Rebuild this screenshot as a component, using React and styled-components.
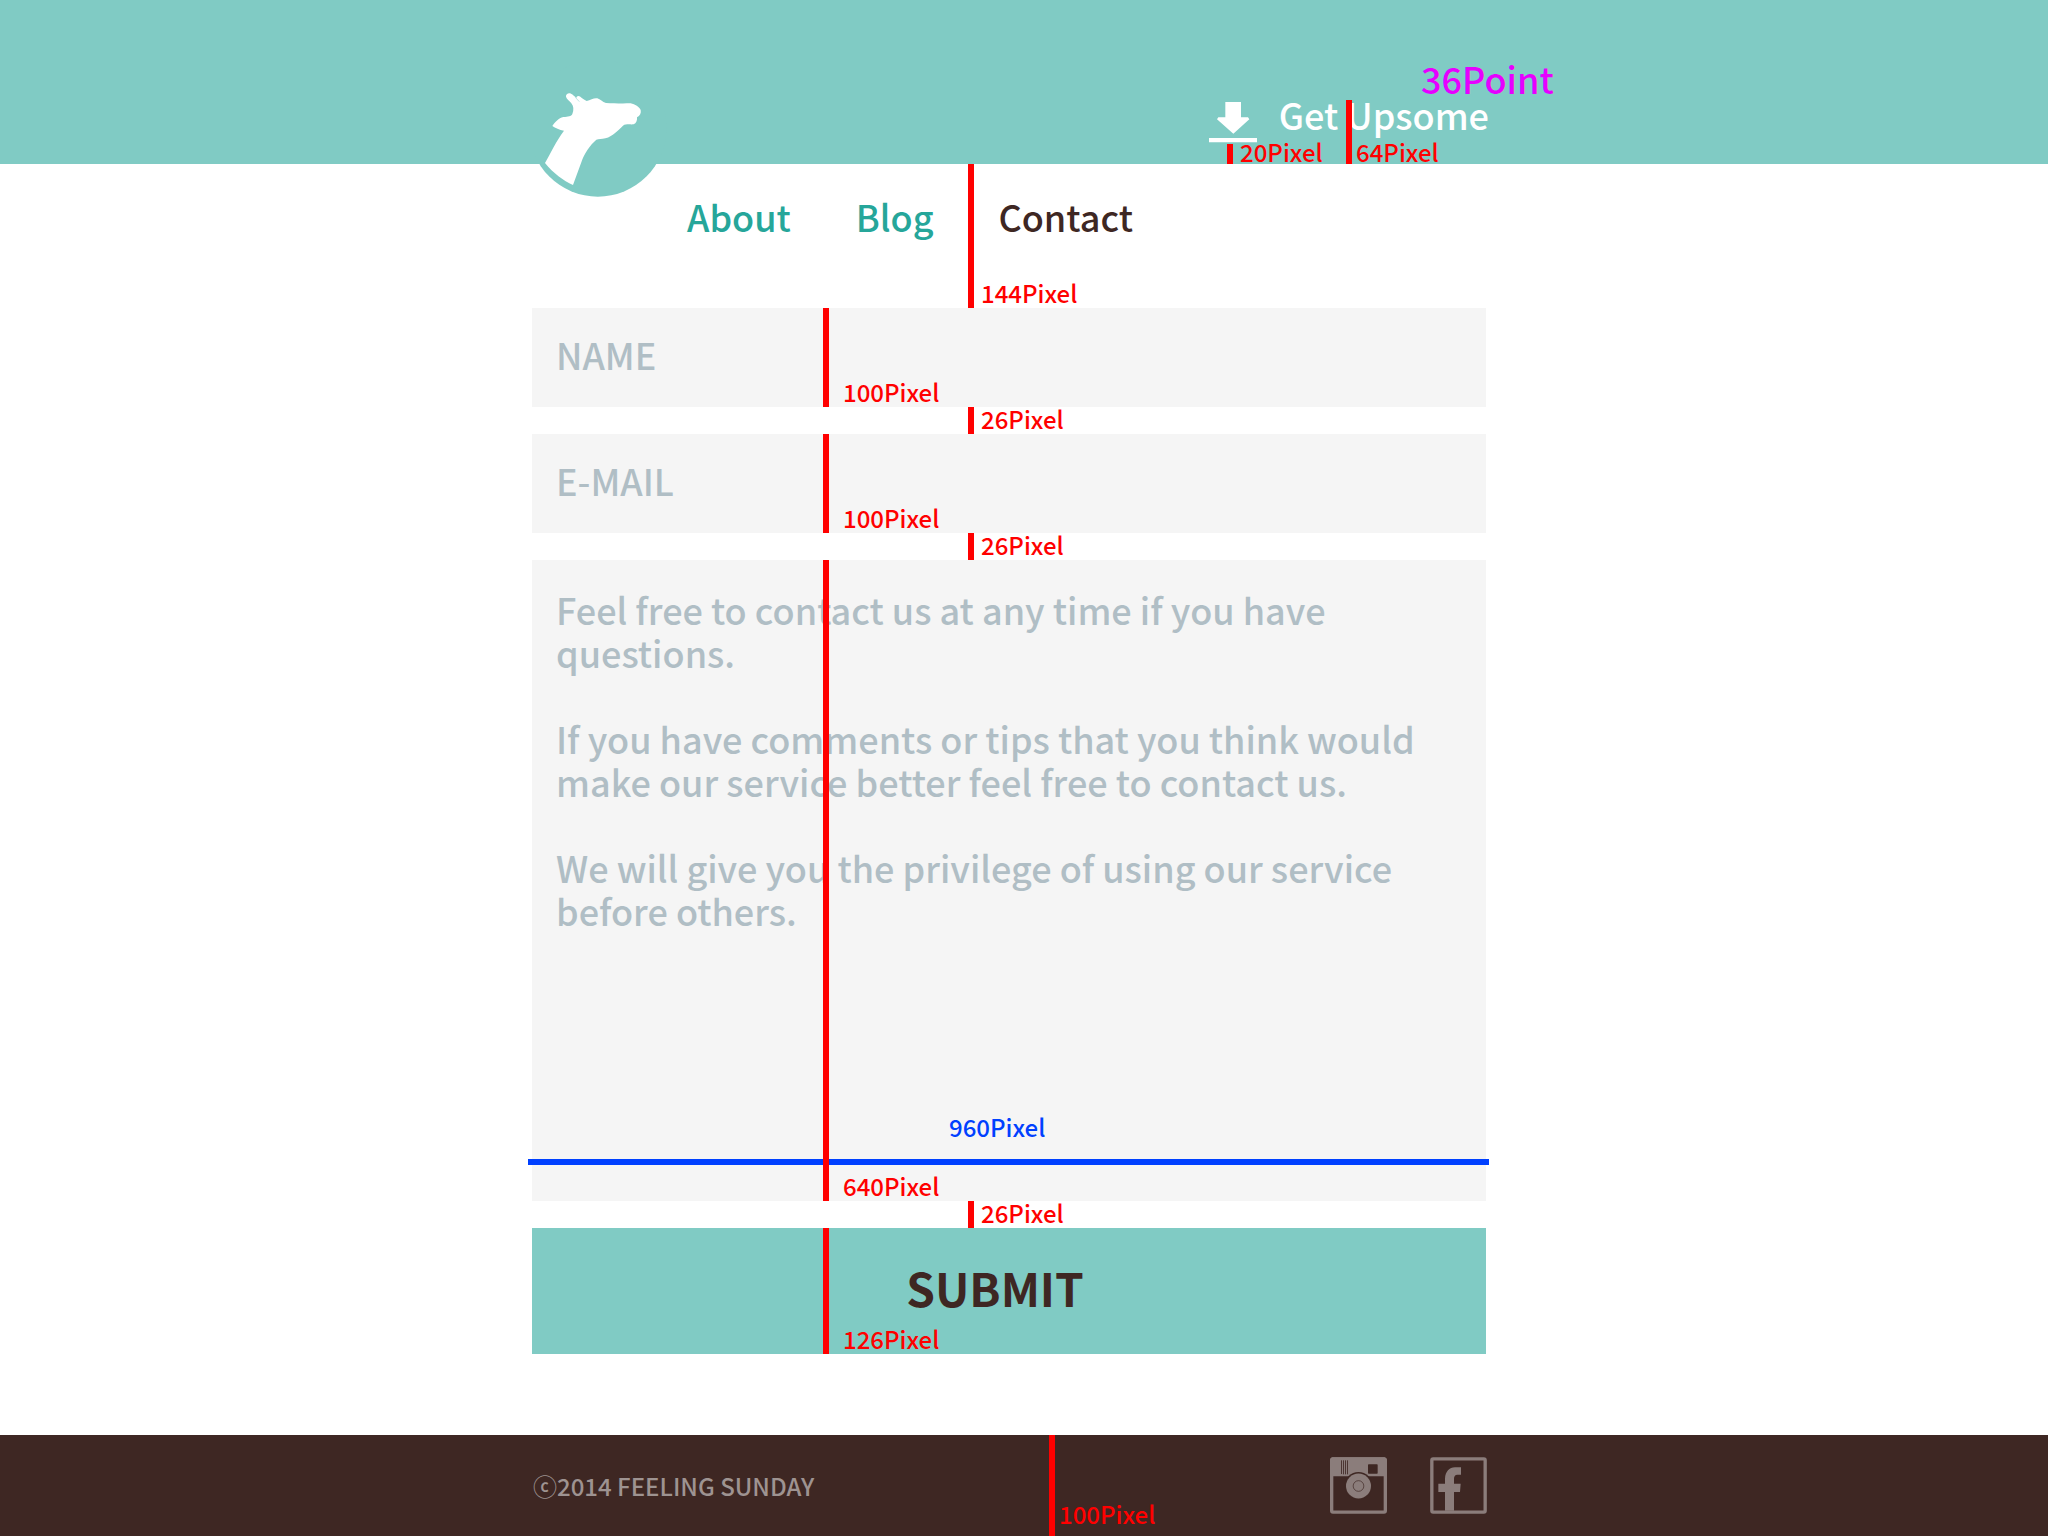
import React from "react";
import styled, { createGlobalStyle, css } from "styled-components";

const color = {
  teal: "#80cbc4",
  tealDark: "#26a69a",
  brown: "#3e2723",
  field: "#f5f5f5",
  hint: "#b0bec5",
  red: "#ff0000",
  blue: "#0040ff",
  magenta: "#e600ff",
  footerText: "#9e9391",
  footerIcon: "#8b7d7b",
};

const GlobalStyle = createGlobalStyle`
  *, *::before, *::after { box-sizing: border-box; }
  body {
    margin: 0;
    background: #fff;
    color: ${color.brown};
    font-family: "Noto Sans CJK KR", "Noto Sans CJK JP", "Noto Sans", sans-serif;
    font-size: 36px;
    font-weight: 500;
    line-height: 43px;
  }
`;

const Page = styled.div`
  display: flex;
  flex-direction: column;
  min-height: 100vh;
  overflow-x: hidden;
`;

const Band = styled.div`
  padding-right: 30px;
  background: ${(p) => p.$fill || "transparent"};
`;

const Container = styled.div`
  position: relative;
  width: 100%;
  max-width: 954px;
  margin: 0 auto;
`;

const HeaderRow = styled(Container)`
  display: flex;
  justify-content: space-between;
  align-items: flex-start;
  height: 164px;
  padding-top: 60px;
`;

const HomeLink = styled.a`
  display: block;
  width: 140px;
  height: 140px;
  margin-left: -3px;

  svg {
    display: block;
  }
`;

const GetLink = styled.a`
  display: flex;
  align-items: flex-start;
  gap: 22px;
  margin-right: -3px;
  padding-top: 33px;
  color: #fff;
  text-decoration: none;
  white-space: nowrap;

  svg {
    margin-top: 9px;
  }
`;

const Nav = styled(Container).attrs({ as: "nav" })`
  display: flex;
  gap: 65px;
  padding: 31px 0 70px 155px;
`;

const NavLink = styled.a`
  color: ${(p) => (p.$active ? color.brown : color.tealDark)};
  text-decoration: none;
`;

const Form = styled(Container).attrs({ as: "form" })`
  display: flex;
  flex-direction: column;
  gap: 27px;
  margin-bottom: 81px;
`;

const Field = styled.div`
  position: relative;
  display: flex;
`;

const control = css`
  display: block;
  width: 100%;
  margin: 0;
  border: 0;
  border-radius: 0;
  outline: 0;
  background: ${color.field};
  color: ${color.brown};
  font: inherit;

  &::placeholder {
    color: ${color.hint};
    opacity: 1;
  }
`;

const TextInput = styled.input`
  ${control}
  height: 99px;
  padding: 0 24px 7px;
`;

const TextArea = styled.textarea`
  ${control}
  height: 641px;
  padding: 28px 24px;
  resize: none;
`;

const SubmitButton = styled.button`
  width: 100%;
  height: 126px;
  padding: 0 28px 8px 0;
  border: 0;
  background: ${color.teal};
  color: ${color.brown};
  font: inherit;
  font-size: 46px;
  font-weight: 700;
  cursor: pointer;
`;

const FooterRow = styled(Container)`
  display: flex;
  align-items: center;
  justify-content: space-between;
  padding: 22px 0 22px 1px;
`;

const Copyright = styled.small`
  color: ${color.footerText};
  font-size: 24px;
  line-height: 24px;
`;

const Social = styled.div`
  display: flex;
  gap: 43px;
  margin-right: -1px;

  a,
  svg {
    display: block;
  }
`;

/* Vertical ruler laid over the block that it measures. */
const Ruler = styled.span`
  position: absolute;
  left: ${(p) => p.$left}px;
  bottom: 0;
  width: 6px;
  height: ${(p) => p.$height || "100%"};
  background: ${color.red};
  pointer-events: none;

  ${(p) =>
    p.$below &&
    css`
      top: 100%;
      bottom: auto;
      height: 27px;
    `}
`;

const noteText = css`
  position: absolute;
  font-size: 24px;
  line-height: 24px;
  white-space: nowrap;
`;

const RulerText = styled.span`
  ${noteText}
  left: ${(p) => p.$gap}px;
  bottom: ${(p) => p.$rise}px;
  color: ${color.red};
`;

const WidthRuler = styled.span`
  position: absolute;
  left: -4px;
  right: -3px;
  bottom: 36px;
  height: 6px;
  background: ${color.blue};
  pointer-events: none;
`;

const WidthText = styled.span`
  ${noteText}
  left: 421px;
  bottom: 26px;
  color: ${color.blue};
`;

const PointText = styled.span`
  position: absolute;
  top: 57px;
  left: 889px;
  color: ${color.magenta};
`;

function Measure({ text, gap = 13, rise = 3, ...place }) {
  return (
    <Ruler {...place}>
      <RulerText $gap={gap} $rise={rise}>
        {text}
      </RulerText>
    </Ruler>
  );
}

function Logo() {
  return (
    <svg width="140" height="140" viewBox="87 0 420 420" aria-hidden="true">
      <circle cx="293.5" cy="204" r="206" fill={color.teal} />
      <path
        fill="#fff"
        d="M135 309C152 280 170 240 192 212C178 210 166 204 157 198C165 186 176 174 190 171C205 170 213 170 217 162C222 150 221 138 214 130C208 122 200 117 198 110C197 102 206 97 213 101C219 104 224 109 229 114C229 108 236 106 241 110C247 115 252 119 260 123C272 119 283 113 292 115C301 118 307 126 318 129C340 130 365 131 392 130C405 133 418 141 422 150C424 160 420 167 411 172C412 182 409 190 401 193C390 194 378 191 369 197C355 210 340 228 316 235C305 238 296 237 289 239C270 255 253 280 244 307L219 375C190 362 160 340 135 309Z"
      />
      <path d="M226 112L238 125" stroke={color.teal} strokeWidth="1.5" />
    </svg>
  );
}

function DownloadIcon() {
  return (
    <svg width="48" height="41" viewBox="87 156 144 123" fill="#fff" aria-hidden="true">
      <path d="M136 156H183V202H204L208 208L160 251L111 208L115 202H136Z" />
      <path d="M87 264H231V277H87Z" />
    </svg>
  );
}

function InstagramIcon() {
  return (
    <svg width="57" height="57" viewBox="90 80 171 171" aria-hidden="true">
      <rect x="95" y="85.500" width="161" height="160" rx="4" fill="none" stroke={color.footerIcon} strokeWidth="10" />
      <path d="M96 81H254L260 87V138H90V87Z" fill={color.footerIcon} />
      <path d="M124.500 90V131M130.500 90V132M136.500 90V132M142.500 90V132" stroke={color.brown} strokeWidth="2.500" />
      <rect x="204" y="102" width="29" height="28" rx="2" fill={color.brown} />
      <circle cx="175.500" cy="167" r="42" fill={color.brown} />
      <circle cx="175.500" cy="167" r="37.500" fill={color.footerIcon} />
      <circle cx="175.500" cy="167" r="16" fill="none" stroke={color.brown} strokeWidth="2" />
    </svg>
  );
}

function FacebookIcon() {
  return (
    <svg width="57" height="57" viewBox="390 80 171 171" aria-hidden="true">
      <rect x="395.500" y="85.500" width="160" height="160" rx="4" fill="none" stroke={color.footerIcon} strokeWidth="10" />
      <path
        fill={color.footerIcon}
        d="M435 241V185H415V160H435V145C436 124 448 111 465 111H483V133H472C465 133 462 138 462 146V160H482L480 185H462V241Z"
      />
    </svg>
  );
}

const message = [
  "Feel free to contact us at any time if you have",
  "questions.",
  "",
  "If you have comments or tips that you think would",
  "make our service better feel free to contact us.",
  "",
  "We will give you the privilege of using our service",
  "before others.",
].join("\n");

export default function App() {
  return (
    <Page>
      <GlobalStyle />
      <Band as="header" $fill={color.teal}>
        <HeaderRow>
          <HomeLink href="#home" aria-label="Home">
            <Logo />
          </HomeLink>
          <GetLink href="#get">
            <DownloadIcon />
            Get Upsome
          </GetLink>
          <PointText>36Point</PointText>
          <Measure $left={695} $height="20px" text="20Pixel" rise={0} />
          <Measure $left={814} $height="64px" text="64Pixel" gap={10} rise={0} />
        </HeaderRow>
      </Band>

      <Band>
        <Nav>
          <NavLink href="#about">About</NavLink>
          <NavLink href="#blog">Blog</NavLink>
          <NavLink href="#contact" $active aria-current="page">
            Contact
          </NavLink>
          <Measure $left={436} text="144Pixel" />
        </Nav>
      </Band>

      <Band as="main">
        <Form onSubmit={(e) => e.preventDefault()}>
          <Field>
            <TextInput type="text" aria-label="Name" placeholder="NAME" />
            <Measure $left={291} text="100Pixel" gap={20} />
            <Measure $left={436} $below text="26Pixel" />
          </Field>
          <Field>
            <TextInput type="email" aria-label="E-mail" placeholder="E-MAIL" />
            <Measure $left={291} text="100Pixel" gap={20} />
            <Measure $left={436} $below text="26Pixel" />
          </Field>
          <Field>
            <TextArea aria-label="Message" placeholder={message} />
            <WidthRuler>
              <WidthText>960Pixel</WidthText>
            </WidthRuler>
            <Measure $left={291} text="640Pixel" gap={20} />
            <Measure $left={436} $below text="26Pixel" />
          </Field>
          <Field>
            <SubmitButton type="submit">SUBMIT</SubmitButton>
            <Measure $left={291} text="126Pixel" gap={20} />
          </Field>
        </Form>
      </Band>

      <Band as="footer" $fill={color.brown}>
        <FooterRow>
          <Copyright>ⓒ2014 FEELING SUNDAY</Copyright>
          <Social>
            <a href="#instagram" aria-label="Instagram">
              <InstagramIcon />
            </a>
            <a href="#facebook" aria-label="Facebook">
              <FacebookIcon />
            </a>
          </Social>
          <Measure $left={517} text="100Pixel" gap={10} rise={10} />
        </FooterRow>
      </Band>
    </Page>
  );
}
